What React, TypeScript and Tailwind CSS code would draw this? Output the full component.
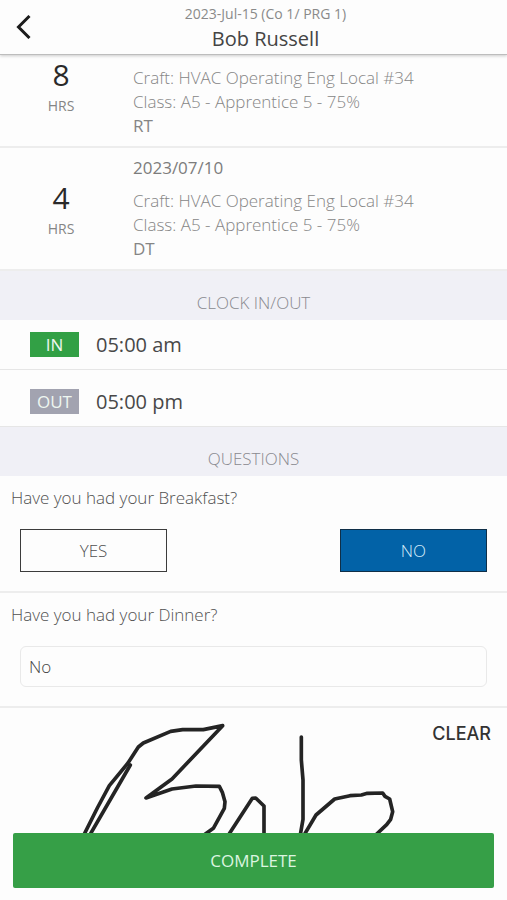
import { useState } from "react";
import type { ReactNode } from "react";

type HoursRowProps = {
  hours: number;
  date?: string;
  craft: string;
  jobClass: string;
  payType: string;
};

function HoursRow({ hours, date, craft, jobClass, payType }: HoursRowProps) {
  return (
    <li className="flex items-end border-b-2 border-[#ededed] pr-3">
      <div className="flex w-[122px] shrink-0 flex-col items-center gap-[3px] pb-7">
        <span className="text-3xl leading-8 text-[#2a2a2a]">{hours}</span>
        <span className="text-sm leading-6 text-[#858585]">HRS</span>
      </div>
      <div className="ml-[11px] py-2 text-[17px] leading-6 font-light text-[#868686]">
        {date ? (
          <p className="mb-[9px] font-normal text-[#7c7c7c]">{date}</p>
        ) : null}
        <p>Craft: {craft}</p>
        <p>Class: {jobClass}</p>
        <p className="font-normal text-[#858585]">{payType}</p>
      </div>
    </li>
  );
}

function SectionTitle({ children }: { children: ReactNode }) {
  return (
    <h2 className="bg-[#f0f0f6] pt-[19px] pb-1 text-center text-[17px] leading-[26px] font-light text-[#8a8a90]">
      {children}
    </h2>
  );
}

function ClockRow({
  label,
  time,
  badgeClassName,
}: {
  label: string;
  time: string;
  badgeClassName: string;
}) {
  return (
    <div className="flex items-center gap-[17px] border-b border-[#e6e6e6] pt-3 pb-3 pl-[30px] last:pt-[19px]">
      <dt
        className={`w-[49px] text-center text-[17px] leading-[25px] text-[#eef7f0] ${badgeClassName}`}
      >
        {label}
      </dt>
      <dd className="text-xl leading-[25px] text-[#484848]">{time}</dd>
    </div>
  );
}

const strokes = [
  "M252 404 L292 324 L328 257 L384 189 L415 141 L430 129 L512 94 L548 89 L610 89 L668 77 L516 237 L438 294 L516 267 L588 258 L658 259 L667 277 L675 305 L673 325 L640 385 L616 402",
  "M391 195 L270 404",
  "M686 404 L757 295 L767 294 L792 318 L792 404",
  "M904 111 L904 180 L909 240 L909 358 L901 404",
  "M913 404 L948 345 L1004 297 L1050 287 L1084 285 L1102 280 L1148 279 L1155 289 L1169 297 L1178 335 L1172 358 L1160 374 L1130 402",
];

function SignaturePad() {
  const [signed, setSigned] = useState(true);

  return (
    <section aria-label="Signature" className="relative flex-1 overflow-hidden">
      <svg
        viewBox="0 24 1521 375"
        className="h-[125px] w-full"
        fill="none"
        stroke="#242424"
        strokeWidth="11"
        strokeLinecap="round"
        strokeLinejoin="round"
        aria-hidden="true"
      >
        {signed ? strokes.map((d) => <path key={d} d={d} />) : null}
      </svg>
      <button
        type="button"
        onClick={() => setSigned(false)}
        className="absolute top-3.5 right-4 font-['Inter',sans-serif] text-lg leading-6 font-medium text-[#333]"
      >
        CLEAR
      </button>
    </section>
  );
}

export default function App() {
  const [breakfast, setBreakfast] = useState("NO");
  const [dinner, setDinner] = useState("No");

  return (
    <div className="flex min-h-screen flex-col bg-[#fdfdfd] font-['Open_Sans',sans-serif]">
      <header className="sticky top-0 z-10 flex items-center border-b border-[#bdbdbd] bg-[#fdfdfd] shadow-[0_1px_3px_rgba(0,0,0,0.2)]">
        <button type="button" aria-label="Back" className="w-11 pl-4">
          <svg
            viewBox="0 0 16 24"
            className="h-6 w-4"
            fill="none"
            stroke="#1c1c1c"
            strokeWidth="3"
            aria-hidden="true"
          >
            <path d="M13.5 1 L2.5 12 L13.5 23" />
          </svg>
        </button>
        <div className="flex-1 pt-1 pr-5 text-center">
          <p className="text-sm leading-5 text-[#8a8a8a]">
            2023-Jul-15 (Co 1/ PRG 1)
          </p>
          <h1 className="text-xl leading-[30px] text-[#444]">Bob Russell</h1>
        </div>
      </header>

      <main className="flex flex-1 flex-col">
        <ul className="pt-[3px]">
          <HoursRow
            hours={8}
            craft="HVAC Operating Eng Local #34"
            jobClass="A5 - Apprentice 5 - 75%"
            payType="RT"
          />
          <HoursRow
            hours={4}
            date="2023/07/10"
            craft="HVAC Operating Eng Local #34"
            jobClass="A5 - Apprentice 5 - 75%"
            payType="DT"
          />
        </ul>

        <SectionTitle>CLOCK IN/OUT</SectionTitle>
        <dl>
          <ClockRow label="IN" time="05:00 am" badgeClassName="bg-[#32a045]" />
          <ClockRow label="OUT" time="05:00 pm" badgeClassName="bg-[#a2a3b0]" />
        </dl>

        <SectionTitle>QUESTIONS</SectionTitle>
        <fieldset className="border-b-2 border-[#ededed] pb-[19px]">
          <legend className="px-[11px] pt-2.5 text-[17px] leading-6 font-light text-[#505050]">
            Have you had your Breakfast?
          </legend>
          <div className="flex justify-between px-5 pt-[19px]">
            {["YES", "NO"].map((answer) => (
              <button
                key={answer}
                type="button"
                aria-pressed={breakfast === answer}
                onClick={() => setBreakfast(answer)}
                className={`h-[43px] w-[147px] border text-[17px] font-light ${
                  breakfast === answer
                    ? "border-[#0f2f48] bg-[#0262a7] text-[#d5ecfa]"
                    : "border-[#3c3c3c] text-[#505050]"
                }`}
              >
                {answer}
              </button>
            ))}
          </div>
        </fieldset>
        <div className="border-b-2 border-[#ededed] pb-[19px]">
          <label
            htmlFor="dinner"
            className="block px-[11px] pt-2.5 text-[17px] leading-6 font-light text-[#505050]"
          >
            Have you had your Dinner?
          </label>
          <div className="px-5 pt-[19px]">
            <input
              id="dinner"
              type="text"
              value={dinner}
              onChange={(e) => setDinner(e.target.value)}
              className="h-[41px] w-full rounded-md border border-[#e9e9e9] px-2 text-[17px] font-light text-[#444]"
            />
          </div>
        </div>

        <SignaturePad />
      </main>

      <footer className="sticky bottom-0 bg-[#fdfdfd] px-[13px] pb-3">
        <button
          type="button"
          className="h-[55px] w-full rounded-xs bg-[#369f47] text-[17px] text-[#dcf5e0]"
        >
          COMPLETE
        </button>
      </footer>
    </div>
  );
}
